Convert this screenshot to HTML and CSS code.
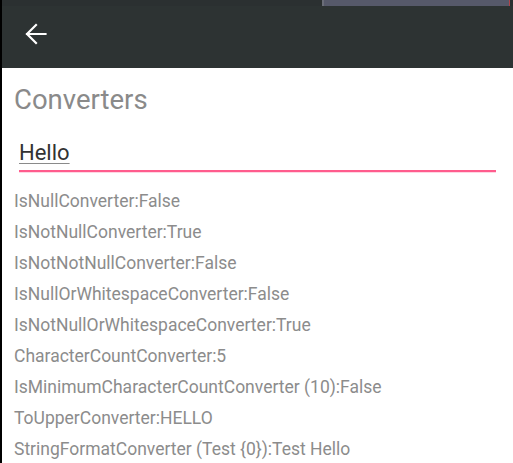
FILE: index.html
```html
<!DOCTYPE html>
<html>
<head>
<meta charset="utf-8">
<link rel="stylesheet" href="styles.css">
</head>
<body>
<div class="app">
  <div class="statusbar"><div class="status-tab"></div></div>
  <header class="toolbar">
    <svg class="back" width="22" height="22" viewBox="0 0 22 22" aria-hidden="true">
      <path d="M2 11 H20.5 M11 2 L2 11 L11 20" fill="none" stroke="#ffffff" stroke-width="2.2" stroke-linecap="square" stroke-linejoin="miter"/>
    </svg>
  </header>
  <main class="content">
    <h1 class="title">Converters</h1>
    <div class="field"><span class="field-text">Hello</span></div>
    <ul class="results">
      <li>IsNullConverter:False</li>
      <li>IsNotNullConverter:True</li>
      <li>IsNotNotNullConverter:False</li>
      <li>IsNullOrWhitespaceConverter:False</li>
      <li>IsNotNullOrWhitespaceConverter:True</li>
      <li>CharacterCountConverter:5</li>
      <li>IsMinimumCharacterCountConverter (10):False</li>
      <li>ToUpperConverter:HELLO</li>
      <li>StringFormatConverter (Test {0}):Test Hello</li>
    </ul>
  </main>
</div>
</body>
</html>
```

FILE: styles.css
```css
html, body {
  margin: 0;
  padding: 0;
  background: #ffffff;
  overflow: hidden;
}

.app {
  width: 511px;
  height: 463px;
  border-left: 2px solid #000000;
  font-family: Roboto, "Noto Sans", sans-serif;
  display: flex;
  flex-direction: column;
}

.statusbar {
  flex-shrink: 0;
  height: 6px;
  background: #2b3031;
  display: flex;
  justify-content: flex-end;
  padding-right: 3px;
}

.status-tab {
  width: 185px;
  height: 6px;
  background: #56596a;
  border-left: 2px solid #6a6d78;
  border-right: 1px solid #b0454a;
}

.toolbar {
  flex-shrink: 0;
  height: 62px;
  background: #2d3333;
  display: flex;
  align-items: flex-start;
  padding-left: 23px;
  padding-top: 17px;
  box-sizing: border-box;
}

.back {
  display: block;
}

.content {
  flex-shrink: 0;
  padding: 0 17px 0 12px;
}

.title {
  margin: 16px 0 0 0;
  font-size: 27.5px;
  line-height: 32px;
  font-weight: 400;
  color: #8a8a8a;
}

.field {
  margin: 23px 0 0 5px;
  height: 31px;
  border-bottom: 2px solid #ff5c8d;
  box-shadow: 0 1px 0 #ffd6e3;
}

.field-text {
  display: block;
  font-size: 22px;
  line-height: 28px;
  color: #333333;
  text-decoration: underline;
  text-decoration-color: #8a8a8a;
  text-underline-offset: 3px;
  text-decoration-thickness: 1px;
}

.results {
  list-style: none;
  margin: 14px 0 0 0;
  padding: 0;
}

.results li {
  font-size: 17.5px;
  line-height: 31px;
  color: #8c8c8c;
  white-space: nowrap;
}
```
